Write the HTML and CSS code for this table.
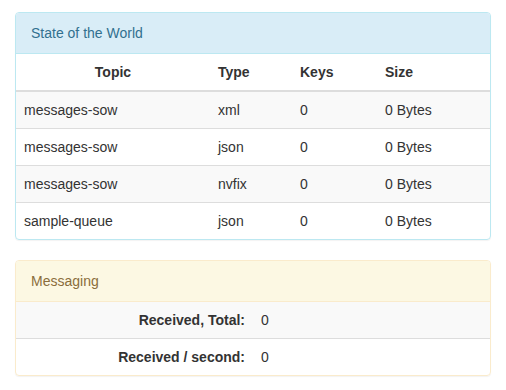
FILE: index.html
```html
<!DOCTYPE html>
<html lang="en">
<head>
    <meta charset="UTF-8">
    <title>Status</title>
    <link rel="stylesheet" href="styles.css">
</head>
<body>
    <div class="container">
        <div class="panel panel-info">
            <div class="panel-heading">State of the World</div>
            <table class="table table-striped sow-table">
                <thead>
                    <tr>
                        <th class="col-topic">Topic</th>
                        <th class="col-type">Type</th>
                        <th class="col-keys">Keys</th>
                        <th>Size</th>
                    </tr>
                </thead>
                <tbody>
                    <tr><td>messages-sow</td><td>xml</td><td>0</td><td>0 Bytes</td></tr>
                    <tr><td>messages-sow</td><td>json</td><td>0</td><td>0 Bytes</td></tr>
                    <tr><td>messages-sow</td><td>nvfix</td><td>0</td><td>0 Bytes</td></tr>
                    <tr><td>sample-queue</td><td>json</td><td>0</td><td>0 Bytes</td></tr>
                </tbody>
            </table>
        </div>

        <div class="panel panel-warning">
            <div class="panel-heading">Messaging</div>
            <table class="table table-striped stats-table">
                <tbody>
                    <tr><th>Received, Total:</th><td>0</td></tr>
                    <tr><th>Received / second:</th><td>0</td></tr>
                </tbody>
            </table>
        </div>
    </div>
</body>
</html>
```

FILE: styles.css
```css
body {
    margin: 0;
    font-family: "Liberation Sans", Arial, sans-serif;
    font-size: 14px;
    line-height: 20px;
    color: #333;
    background: #fff;
}
.container {
    padding: 12px 15px;
}
.panel {
    border: 1px solid #ddd;
    border-radius: 4px;
    margin-bottom: 20px;
    box-shadow: 0 1px 1px rgba(0, 0, 0, 0.05);
    overflow: hidden;
}
.panel-heading {
    padding: 10px 15px;
    border-bottom: 1px solid transparent;
}
.panel-info {
    border-color: #bce8f1;
}
.panel-info .panel-heading {
    background: #d9edf7;
    color: #31708f;
    border-color: #bce8f1;
}
.panel-warning {
    border-color: #faebcc;
}
.panel-warning .panel-heading {
    background: #fcf8e3;
    color: #8a6d3b;
    border-color: #faebcc;
}
.table {
    width: 100%;
    border-collapse: collapse;
}
.table th,
.table td {
    padding: 8px;
    border-top: 1px solid #ddd;
    text-align: left;
    vertical-align: top;
}
.table thead th {
    border-top: 0;
    border-bottom: 2px solid #ddd;
}
.table tbody tr:first-child th,
.table tbody tr:first-child td {
    border-top: 0;
}
.table thead + tbody tr:first-child td {
    border-top: 0;
}
.table-striped tbody tr:nth-child(odd) {
    background: #f9f9f9;
}
.sow-table .col-topic {
    width: 178px;
    text-align: center;
}
.sow-table .col-type {
    width: 66px;
}
.sow-table .col-keys {
    width: 69px;
}
.stats-table th {
    width: 221px;
    text-align: right;
}
```
